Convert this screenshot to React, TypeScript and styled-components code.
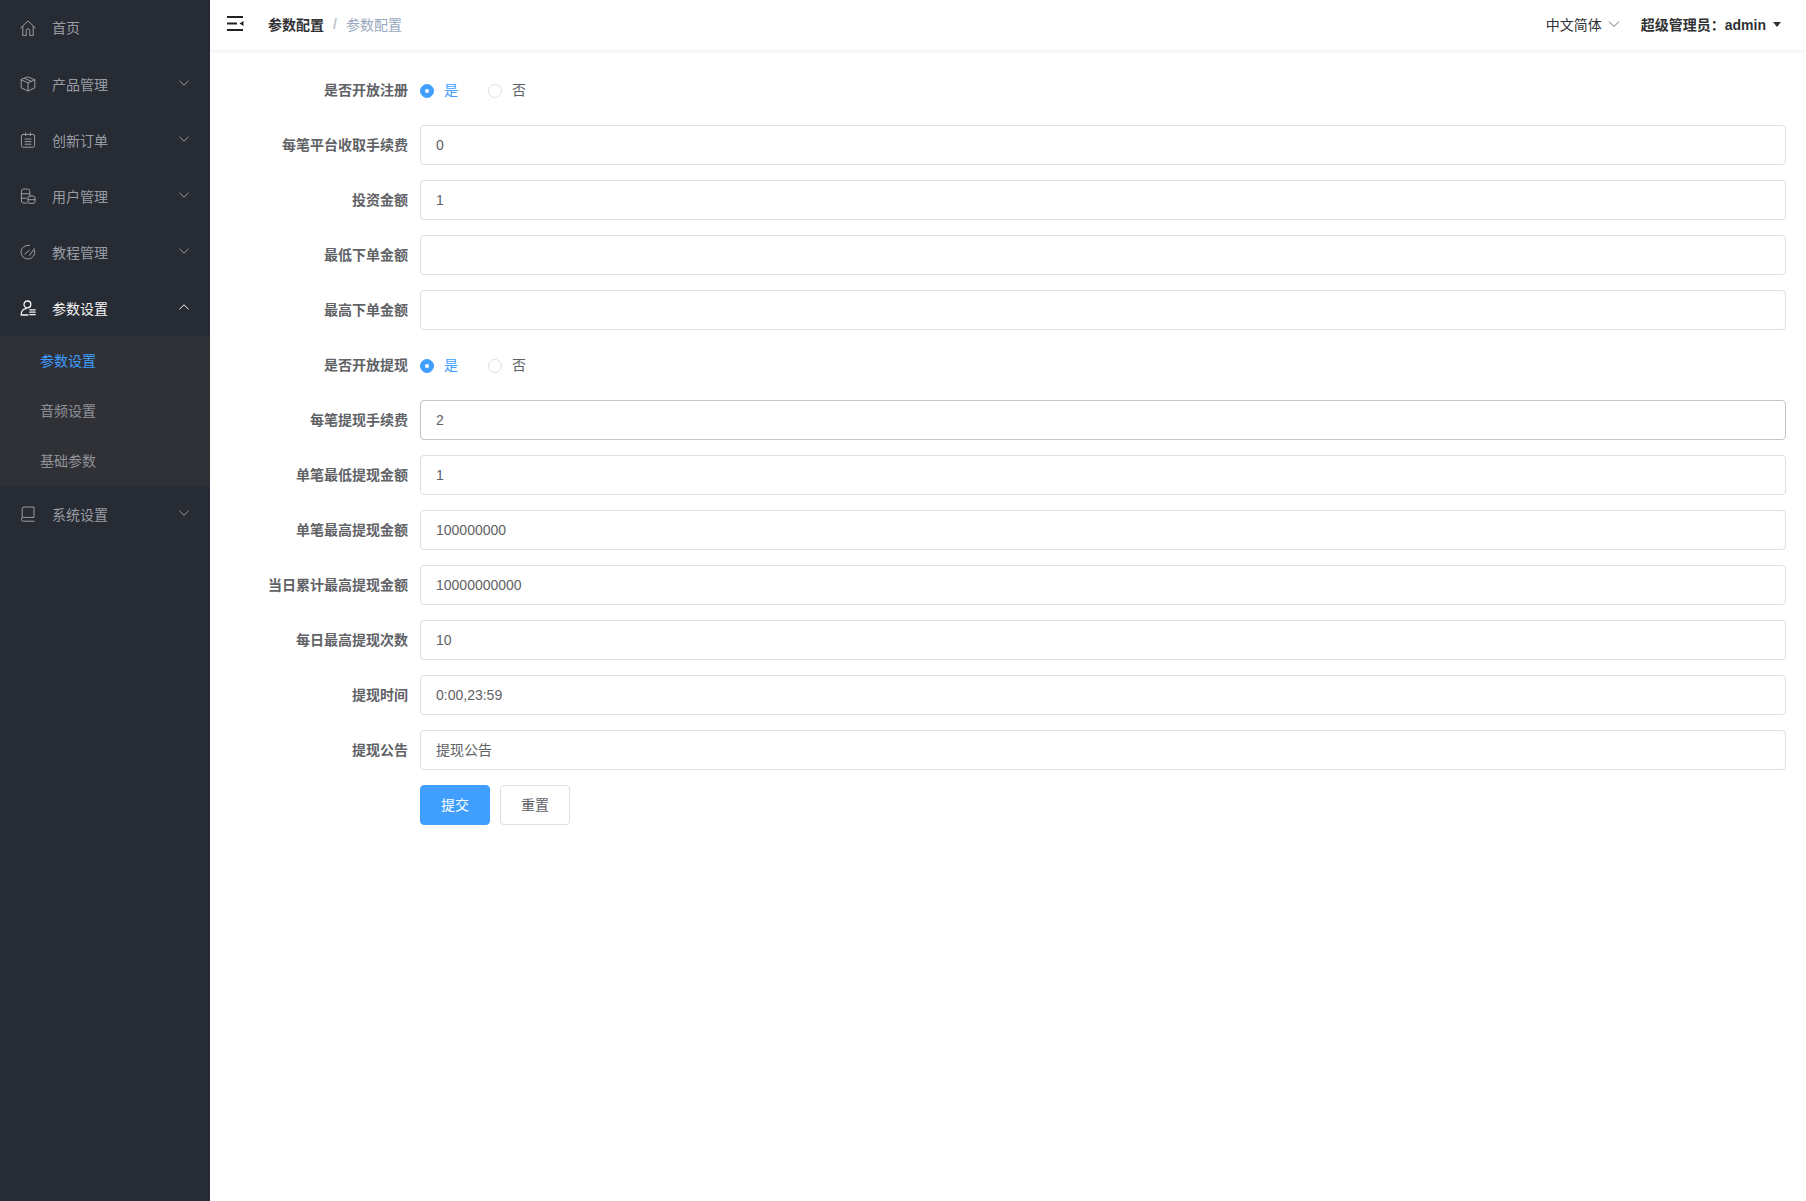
import { ReactNode } from "react";
import styled, { createGlobalStyle } from "styled-components";

const GlobalStyle = createGlobalStyle`
  html, body {
    margin: 0;
    padding: 0;
    height: 100%;
    background: #fff;
    font-family: "Liberation Sans", "Noto Sans CJK SC", sans-serif;
    -webkit-font-smoothing: antialiased;
  }
  #root { height: 100%; }
  * { box-sizing: border-box; }
`;

const Layout = styled.div`
  display: flex;
  width: 100%;
  height: 100vh;
  overflow: hidden;
`;

const Sidebar = styled.aside`
  flex: 0 0 210px;
  background-color: #272b33;
`;

const MenuTitle = styled.div<{ $active?: boolean }>`
  display: flex;
  align-items: center;
  height: 56px;
  padding-left: 20px;
  padding-right: 20px;
  font-size: 14px;
  color: ${(p) => (p.$active ? "#f4f4f5" : "#9a9da3")};
  svg.menu-icon {
    flex: 0 0 16px;
    margin-right: 16px;
    stroke-width: ${(p) => (p.$active ? 1.3 : 1)};
  }
  &:first-child > span {
    margin-top: -2px;
  }
`;

const MenuLabel = styled.span`
  flex: 1;
`;

const Arrow = styled.svg<{ $open?: boolean }>`
  width: 12px;
  height: 12px;
  margin-top: -2px;
  transform: ${(p) => (p.$open ? "rotate(180deg)" : "none")};
`;

const SubMenu = styled.div`
  background-color: #2f3136;
`;

const SubItem = styled.div<{ $active?: boolean }>`
  display: flex;
  align-items: center;
  height: 50px;
  padding: 0 0 2px 40px;
  font-size: 14px;
  color: ${(p) => (p.$active ? "#409eff" : "#8f9196")};
`;

const Main = styled.main`
  flex: 1;
  min-width: 0;
`;

const TopBar = styled.header`
  display: flex;
  align-items: center;
  justify-content: space-between;
  height: 50px;
  padding: 0 25px 2px 17px;
  background: #fff;
  box-shadow: 0 1px 4px rgba(0, 21, 41, 0.08);
`;

const TopLeft = styled.div`
  display: flex;
  align-items: center;
  font-size: 14px;
`;

const Crumb = styled.span<{ $current?: boolean }>`
  color: ${(p) => (p.$current ? "#97a8be" : "#303133")};
  font-weight: ${(p) => (p.$current ? 400 : 700)};
`;

const CrumbSep = styled.span`
  margin: 0 9px;
  color: #c0c4cc;
  font-weight: 700;
`;

const Hamburger = styled.svg`
  width: 17px;
  height: 15px;
  margin-right: 24px;
  margin-top: -1px;
`;

const TopRight = styled.div`
  display: flex;
  align-items: center;
  font-size: 14px;
`;

const Lang = styled.div`
  display: flex;
  align-items: center;
  gap: 6px;
  margin-right: 21px;
  color: #303133;
`;

const UserName = styled.div`
  display: flex;
  align-items: center;
  gap: 7px;
  font-weight: 700;
  color: #303133;
`;

const Caret = styled.span`
  width: 0;
  height: 0;
  border-left: 4.5px solid transparent;
  border-right: 4.5px solid transparent;
  border-top: 5px solid #303133;
`;

const Form = styled.form`
  padding: 20px 20px 0 20px;
`;

const FormItem = styled.div`
  display: flex;
  align-items: center;
  height: 40px;
  margin-bottom: 15px;
`;

const Label = styled.label`
  flex: 0 0 190px;
  padding: 0 12px 2px 0;
  text-align: right;
  font-size: 14px;
  font-weight: 700;
  color: #606266;
`;

const Input = styled.input<{ $focused?: boolean; $cjk?: boolean }>`
  flex: 1;
  min-width: 0;
  height: 40px;
  padding: 0 15px ${(p) => (p.$cjk ? "2px" : "0")};
  font-family: inherit;
  font-size: 14px;
  color: #606266;
  background: #fff;
  border: 1px solid ${(p) => (p.$focused ? "#c0c4cc" : "#dcdfe6")};
  border-radius: 4px;
  outline: none;
`;

const RadioOption = styled.span<{ $checked?: boolean }>`
  display: flex;
  align-items: center;
  gap: 10px;
  margin-right: 30px;
  font-size: 14px;
  color: ${(p) => (p.$checked ? "#409eff" : "#606266")};
`;

const RadioText = styled.span`
  margin-top: -2px;
`;

const RadioDot = styled.span<{ $checked?: boolean }>`
  display: flex;
  align-items: center;
  justify-content: center;
  width: 14px;
  height: 14px;
  margin-top: 1px;
  border-radius: 50%;
  border: 1px solid ${(p) => (p.$checked ? "#409eff" : "#dcdfe6")};
  background: ${(p) => (p.$checked ? "#409eff" : "#fff")};
  &::after {
    content: "";
    width: 4px;
    height: 4px;
    border-radius: 50%;
    background: #fff;
  }
`;

const Button = styled.button<{ $primary?: boolean }>`
  width: 70px;
  height: 40px;
  margin-right: 10px;
  padding: 0 0 2px;
  font-family: inherit;
  font-size: 14px;
  color: ${(p) => (p.$primary ? "#fff" : "#606266")};
  background: ${(p) => (p.$primary ? "#409eff" : "#fff")};
  border: 1px solid ${(p) => (p.$primary ? "#409eff" : "#dcdfe6")};
  border-radius: 4px;
`;

const stroke = {
  fill: "none",
  stroke: "currentColor",
  strokeLinecap: "round" as const,
  strokeLinejoin: "round" as const,
};

const MenuIcon = ({ children }: { children: ReactNode }) => (
  <svg className="menu-icon" width="16" height="16" viewBox="0 0 16 16" {...stroke}>
    {children}
  </svg>
);

const icons: Record<string, ReactNode> = {
  home: (
    <>
      <path d="M0.6 8 8 0.9 15.4 8" />
      <path d="M2.8 6.4V15.6h3.4v-5a1.8 1.8 0 0 1 3.6 0v5h3.4V6.4" />
    </>
  ),
  box: (
    <>
      <path d="M8 1 14.8 3.8v8L8 15 1.2 11.8v-8Z" />
      <path d="M1.2 3.8 8 6.8 14.8 3.8M8 6.8V15M4.6 2.4l6.8 3" />
    </>
  ),
  order: (
    <>
      <rect x="1.4" y="2.4" width="13.2" height="12.8" rx="1.8" />
      <path d="M5.6 1v2.6M10.4 1v2.6M5 7h6M5 9.6h6M5 12.2h6" />
    </>
  ),
  users: (
    <>
      <path d="M7 15H3.4a2 2 0 0 1-2-2V3.2a2.2 2.2 0 0 1 2.2-2.2h3.8a2.4 2.4 0 0 1 2.4 2.4V7" />
      <path d="M1.4 5.8h8M1.4 10.2h5" />
      <rect x="8" y="8" width="7" height="7.4" rx="2" />
      <path d="M8 11.7h7" />
    </>
  ),
  course: (
    <>
      <path d="M14.6 6.4A6.9 6.9 0 1 1 9.4 1.4" />
      <path d="M4.8 10 9.2 6.4M9.6 11.4l4.8-6.8" />
    </>
  ),
  params: (
    <>
      <circle cx="7.4" cy="4.4" r="3.4" />
      <path d="M8 15H1.2c0-3.8 1.6-6.2 5.2-6.4" />
      <path d="M9.8 9.8h5.4M9.8 12.2h5.4M9.8 14.6h5.4" />
    </>
  ),
  system: (
    <>
      <path d="M2.2 11.4V2.8A1.8 1.8 0 0 1 4 1h10V11.4H3.4a1.9 1.9 0 0 0 0 3.8H14" />
    </>
  ),
};

const ArrowIcon = ({ open }: { open?: boolean }) => (
  <Arrow $open={open} viewBox="0 0 12 12" fill="none" stroke="currentColor" strokeWidth="1">
    <path d="M1.5 3.8 6 8.2l4.5-4.4" />
  </Arrow>
);

const radioRow = (label: string) => (
  <FormItem key={label}>
    <Label>{label}</Label>
    <RadioOption $checked>
      <RadioDot $checked />
      <RadioText>是</RadioText>
    </RadioOption>
    <RadioOption>
      <RadioDot />
      <RadioText>否</RadioText>
    </RadioOption>
  </FormItem>
);

const inputRow = (label: string, value: string, focused?: boolean, cjk?: boolean) => (
  <FormItem key={label}>
    <Label>{label}</Label>
    <Input $focused={focused} $cjk={cjk} defaultValue={value} />
  </FormItem>
);

export default function App() {
  return (
    <Layout>
      <GlobalStyle />
      <Sidebar>
        <MenuTitle>
          <MenuIcon>{icons.home}</MenuIcon>
          <MenuLabel>首页</MenuLabel>
        </MenuTitle>
        <MenuTitle>
          <MenuIcon>{icons.box}</MenuIcon>
          <MenuLabel>产品管理</MenuLabel>
          <ArrowIcon />
        </MenuTitle>
        <MenuTitle>
          <MenuIcon>{icons.order}</MenuIcon>
          <MenuLabel>创新订单</MenuLabel>
          <ArrowIcon />
        </MenuTitle>
        <MenuTitle>
          <MenuIcon>{icons.users}</MenuIcon>
          <MenuLabel>用户管理</MenuLabel>
          <ArrowIcon />
        </MenuTitle>
        <MenuTitle>
          <MenuIcon>{icons.course}</MenuIcon>
          <MenuLabel>教程管理</MenuLabel>
          <ArrowIcon />
        </MenuTitle>
        <MenuTitle $active>
          <MenuIcon>{icons.params}</MenuIcon>
          <MenuLabel>参数设置</MenuLabel>
          <ArrowIcon open />
        </MenuTitle>
        <SubMenu>
          <SubItem $active>参数设置</SubItem>
          <SubItem>音频设置</SubItem>
          <SubItem>基础参数</SubItem>
        </SubMenu>
        <MenuTitle>
          <MenuIcon>{icons.system}</MenuIcon>
          <MenuLabel>系统设置</MenuLabel>
          <ArrowIcon />
        </MenuTitle>
      </Sidebar>
      <Main>
        <TopBar>
          <TopLeft>
            <Hamburger viewBox="0 0 17 15" fill="none" stroke="#222" strokeWidth="1.8">
              <path d="M0 1h16M0 7.5h10M0 14h16" />
              <path d="M16.5 5v5L12.5 7.5Z" fill="#222" stroke="none" />
            </Hamburger>
            <Crumb>参数配置</Crumb>
            <CrumbSep>/</CrumbSep>
            <Crumb $current>参数配置</Crumb>
          </TopLeft>
          <TopRight>
            <Lang>
              中文简体
              <svg width="12" height="12" viewBox="0 0 12 12" fill="none" stroke="#606266" strokeWidth="0.9">
                <path d="M1 3.6 6 8.4l5-4.8" />
              </svg>
            </Lang>
            <UserName>
              超级管理员：admin
              <Caret />
            </UserName>
          </TopRight>
        </TopBar>
        <Form>
          {radioRow("是否开放注册")}
          {inputRow("每笔平台收取手续费", "0")}
          {inputRow("投资金额", "1")}
          {inputRow("最低下单金额", "")}
          {inputRow("最高下单金额", "")}
          {radioRow("是否开放提现")}
          {inputRow("每笔提现手续费", "2", true)}
          {inputRow("单笔最低提现金额", "1")}
          {inputRow("单笔最高提现金额", "100000000")}
          {inputRow("当日累计最高提现金额", "10000000000")}
          {inputRow("每日最高提现次数", "10")}
          {inputRow("提现时间", "0:00,23:59")}
          {inputRow("提现公告", "提现公告", false, true)}
          <FormItem>
            <Label as="span" />
            <Button type="button" $primary>
              提交
            </Button>
            <Button type="button">重置</Button>
          </FormItem>
        </Form>
      </Main>
    </Layout>
  );
}
